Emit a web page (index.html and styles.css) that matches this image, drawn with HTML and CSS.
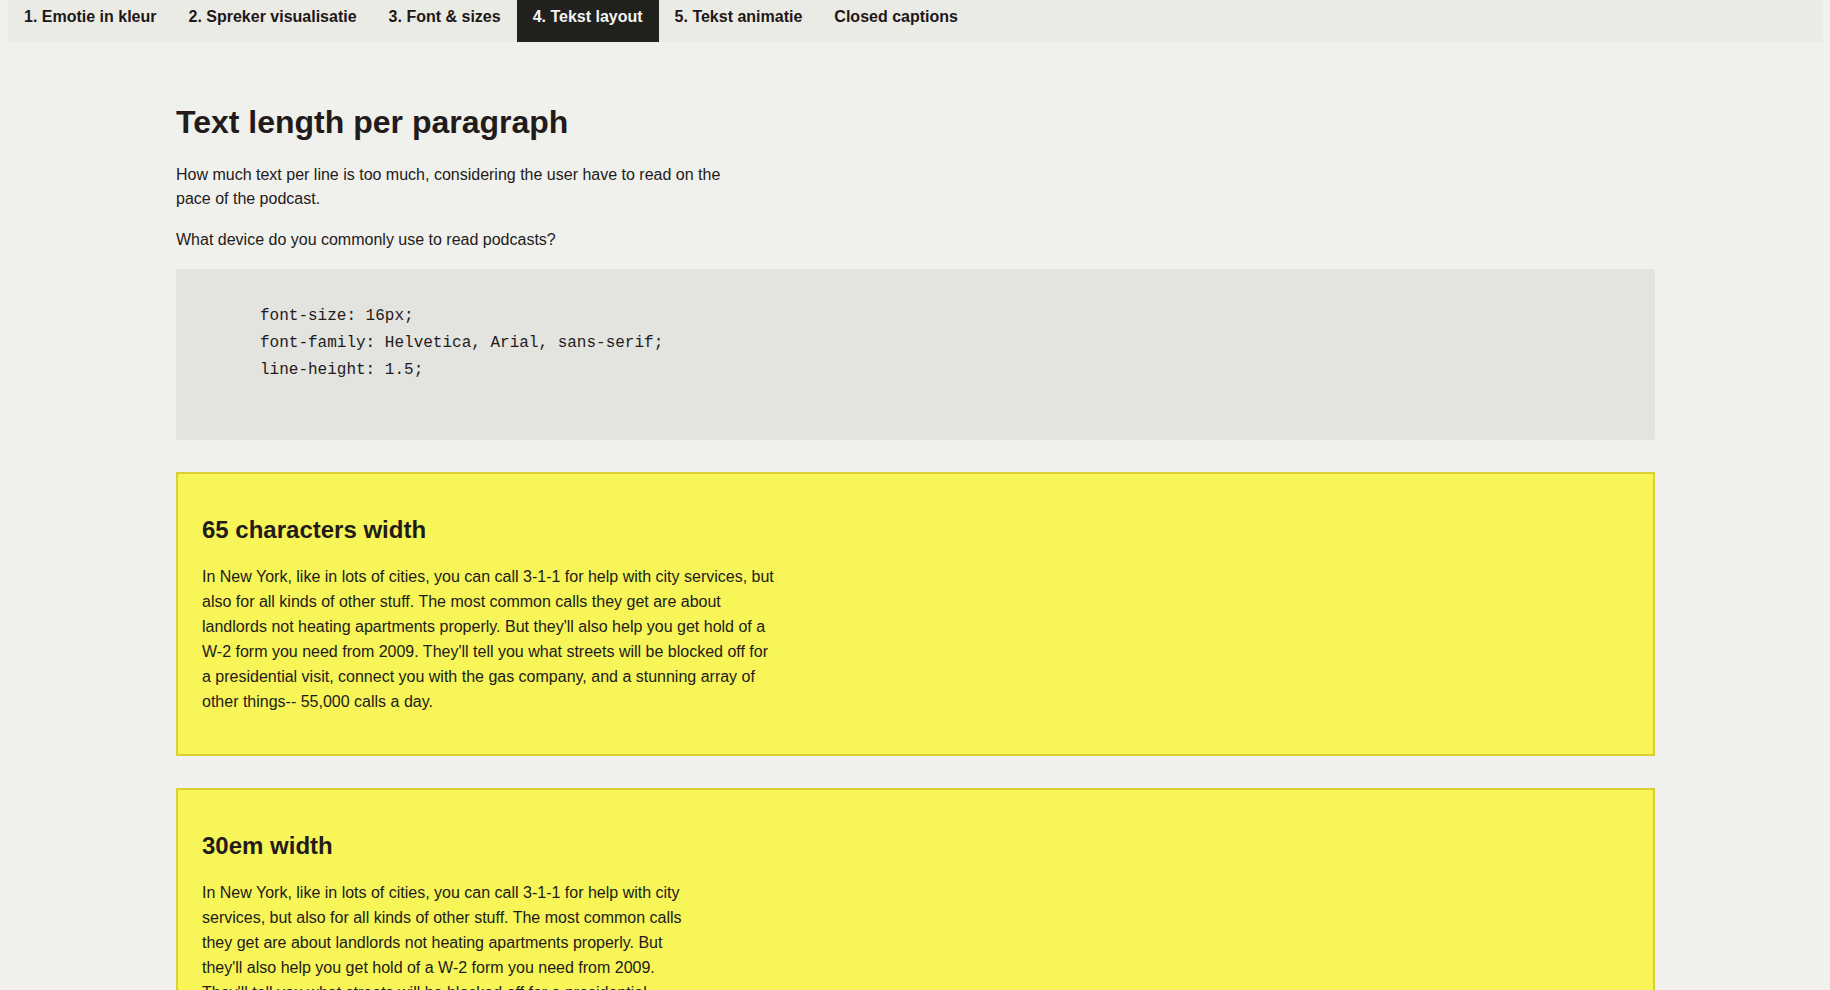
FILE: index.html
```
<!DOCTYPE html>
<html lang="nl">
<head>
<meta charset="utf-8">
<title>Tekst layout</title>
<link rel="stylesheet" href="styles.css">
</head>
<body>
<nav class="tabs">
  <a class="tab" href="#">1. Emotie in kleur</a>
  <a class="tab" href="#">2. Spreker visualisatie</a>
  <a class="tab" href="#">3. Font &amp; sizes</a>
  <a class="tab tab-active" href="#">4. Tekst layout</a>
  <a class="tab" href="#">5. Tekst animatie</a>
  <a class="tab" href="#">Closed captions</a>
</nav>
<main class="page">
  <h1 class="title">Text length per paragraph</h1>
  <p class="intro">How much text per line is too much, considering the user have to read on the pace of the podcast.</p>
  <p class="intro">What device do you commonly use to read podcasts?</p>
  <pre class="code"><code>font-size: 16px;
font-family: Helvetica, Arial, sans-serif;
line-height: 1.5;</code></pre>
  <section class="sample">
    <h2 class="sample-title">65 characters width</h2>
    <p class="sample-text w65">In New York, like in lots of cities, you can call 3-1-1 for help with city services, but also for all kinds of other stuff. The most common calls they get are about landlords not heating apartments properly. But they'll also help you get hold of a W-2 form you need from 2009. They'll tell you what streets will be blocked off for a presidential visit, connect you with the gas company, and a stunning array of other things-- 55,000 calls a day.</p>
  </section>
  <section class="sample">
    <h2 class="sample-title">30em width</h2>
    <p class="sample-text w30">In New York, like in lots of cities, you can call 3-1-1 for help with city services, but also for all kinds of other stuff. The most common calls they get are about landlords not heating apartments properly. But they'll also help you get hold of a W-2 form you need from 2009. They'll tell you what streets will be blocked off for a presidential visit, connect you with the gas company, and a stunning array of other things-- 55,000 calls a day.</p>
  </section>
</main>
</body>
</html>
```

FILE: styles.css
```
html, body {
  background: #f0f0ec;
}
body {
  margin: 0;
  font-family: "Liberation Sans", Arial, sans-serif;
  font-size: 16px;
  color: #221b1b;
}
.tabs {
  display: flex;
  margin: 0 8px;
  background: #ebebe6;
}
.tab {
  display: block;
  padding: 8px 16px 16px;
  font-weight: bold;
  font-size: 16px;
  line-height: 18px;
  color: #1d1717;
  text-decoration: none;
}
.tab-active {
  background: #20201c;
  color: #f4f4f0;
}
.page {
  padding: 41px 175px 40px 176px;
}
.title {
  font-size: 32px;
  margin: 21px 0 21.5px;
  line-height: 37px;
}
.intro {
  max-width: 36em;
  line-height: 24px;
  margin: 17px 0;
}
.code {
  margin: 17px 0 32px;
  padding: 34px 32px 56px 84px;
  background: #e3e3df;
  border-radius: 2px;
  font-family: "Liberation Mono", "Courier New", monospace;
  font-size: 16px;
  line-height: 27px;
  color: #221b1b;
}
.code code {
  font: inherit;
}
.sample {
  margin: 0 0 32px;
  padding: 0 24px;
  background: #f7f557;
  border: 2px solid #dccf33;
  display: flow-root;
}
.sample-title {
  font-size: 24px;
  margin: 42px 0 20px;
  line-height: 28px;
}
.sample-text {
  line-height: 25px;
  margin: 0 0 40px;
}
.w65 {
  max-width: 65ch;
}
.w30 {
  max-width: 30em;
}
```
